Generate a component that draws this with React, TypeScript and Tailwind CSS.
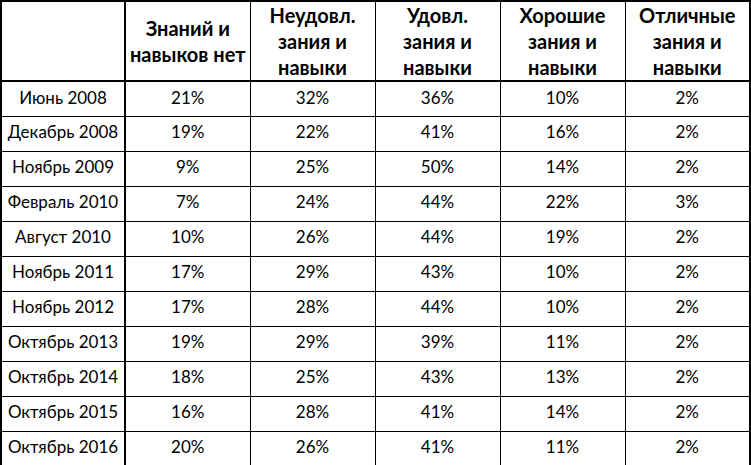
const rows: [string, string, string, string, string, string][] = [
  ['Июнь 2008', '21%', '32%', '36%', '10%', '2%'],
  ['Декабрь 2008', '19%', '22%', '41%', '16%', '2%'],
  ['Ноябрь 2009', '9%', '25%', '50%', '14%', '2%'],
  ['Февраль 2010', '7%', '24%', '44%', '22%', '3%'],
  ['Август 2010', '10%', '26%', '44%', '19%', '2%'],
  ['Ноябрь 2011', '17%', '29%', '43%', '10%', '2%'],
  ['Ноябрь 2012', '17%', '28%', '44%', '10%', '2%'],
  ['Октябрь 2013', '19%', '29%', '39%', '11%', '2%'],
  ['Октябрь 2014', '18%', '25%', '43%', '13%', '2%'],
  ['Октябрь 2015', '16%', '28%', '41%', '14%', '2%'],
  ['Октябрь 2016', '20%', '26%', '41%', '11%', '2%'],
];

const headers = [
  ['Знаний и', 'навыков нет'],
  ['Неудовл.', 'зания и', 'навыки'],
  ['Удовл.', 'зания и', 'навыки'],
  ['Хорошие', 'зания и', 'навыки'],
  ['Отличные', 'зания и', 'навыки'],
];

export default function App() {
  return (
    <div className="w-[751px] h-[465px] bg-white font-['Lato','Liberation_Sans',sans-serif] text-black">
      <table className="table-fixed border-collapse w-[750px] border-2 border-black">
        <colgroup>
          <col className="w-[124px]" />
          <col className="w-[125px]" />
          <col className="w-[125px]" />
          <col className="w-[125px]" />
          <col className="w-[125px]" />
          <col className="w-[125px]" />
        </colgroup>
        <thead>
          <tr className="h-[79px] border-b-2 border-black">
            <th className="border-r-2 border-black" />
            {headers.map((h, i) => (
              <th key={i} className="border border-black border-b-2 font-bold text-[20px] leading-[26px] p-0 align-middle">
                {h.map((line, j) => (
                  <div key={j}>{line}</div>
                ))}
              </th>
            ))}
          </tr>
        </thead>
        <tbody>
          {rows.map((r) => (
            <tr key={r[0]} className="h-[35px]">
              <td className="border border-black border-r-2 text-center text-[17px] p-0 pb-[3px] whitespace-nowrap">{r[0]}</td>
              {r.slice(1).map((v, i) => (
                <td key={i} className="border border-black text-center text-[17px] p-0 pb-[3px]">
                  {v}
                </td>
              ))}
            </tr>
          ))}
        </tbody>
      </table>
    </div>
  );
}
